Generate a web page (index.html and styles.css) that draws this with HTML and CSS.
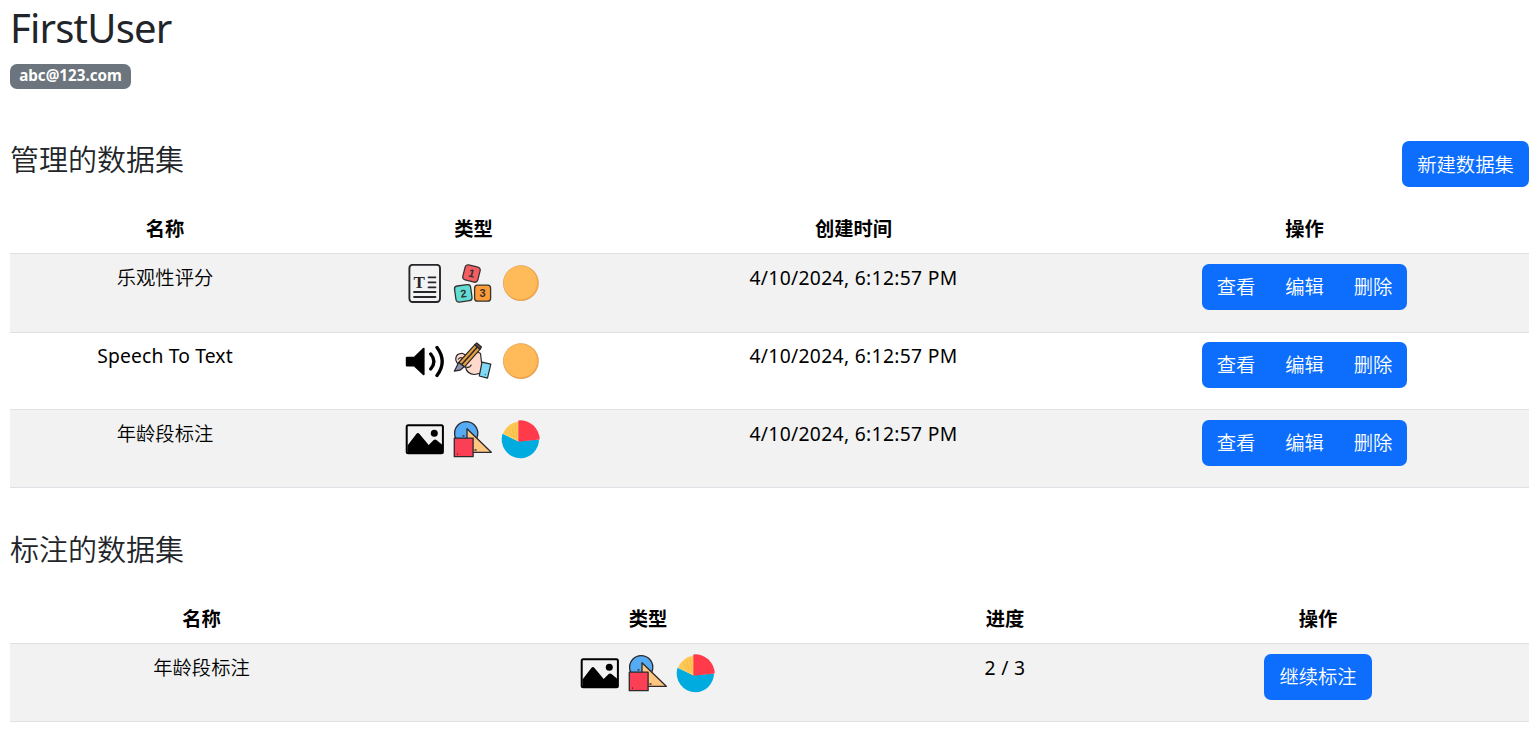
FILE: index.html
```html
<!DOCTYPE html>
<html lang="zh-CN">
<head>
<meta charset="utf-8">
<title>FirstUser</title>
<link rel="stylesheet" href="styles.css">
</head>
<body>
<svg class="sprite" aria-hidden="true">
  <symbol id="document" viewBox="0 0 39 39">
    <rect x="4.4" y=".8" width="30.6" height="37.2" rx="3.2" fill="#f3f3f3" stroke="#29262b" stroke-width="1.9"/>
    <text x="8.6" y="24" class="serif-mark">T</text>
    <path d="M23.500 13.3h7M23.500 18.3h7M23.500 23.3h7M9 28h21.5M9 33h21.5" fill="none" stroke="#29262b" stroke-width="1.8" stroke-linecap="round"/>
  </symbol>
  <symbol id="blocks" viewBox="0 0 39 39">
    <g stroke="#36332f" stroke-width="1.3">
      <g transform="rotate(14 18.5 9.4)"><rect x="10.8" y="1.8" width="15.4" height="15.4" rx="3" fill="#f35d63"/><text x="18.5" y="13" class="block-mark">1</text></g>
      <g transform="rotate(-8 10.4 29.4)"><rect x="2.2" y="21.2" width="16.2" height="16.2" rx="3" fill="#62ddd5"/><text x="10.4" y="33.4" class="block-mark">2</text></g>
      <rect x="21.6" y="21.2" width="16" height="16" rx="3" fill="#ff9c38"/><text x="29.6" y="33.4" class="block-mark">3</text>
    </g>
  </symbol>
  <symbol id="coin" viewBox="0 0 39 39">
    <circle cx="19.9" cy="19.2" r="17.9" fill="#dca367"/>
    <circle cx="19.9" cy="19.1" r="17.3" fill="#f7a647"/>
    <circle cx="19.3" cy="18.6" r="16.7" fill="#ffbb59"/>
  </symbol>
  <symbol id="sound" viewBox="0 0 39 39">
    <path d="M1.8 14.7H9L18 6q1.6-1 1.6.8v25.4q0 1.8-1.6.8L9 24.4H1.8q-1 0-1-1v-7.7q0-1 1-1Z"/>
    <path d="M25.7 12q6.400 7.500 0 15M32 5.500q10.400 13.900 0 28" fill="none" stroke="#000" stroke-width="3.300" stroke-linecap="round"/>
  </symbol>
  <symbol id="writing" viewBox="0 0 39 39">
    <g stroke="#29272b" stroke-width="1.2" stroke-linejoin="round">
      <path d="M3 15.500Q3.500 11.500 9 11.300l5 2.200L23 9l4.500 2.500 1 8.500 1.500 3-2 8.200-6.500 1.300Q14 32 12.500 25L5 22Q2 18.500 3 15.500Z" fill="#ffd9cc"/>
      <path d="m29 20.200 8.800 2-3.300 14-8.200-2.200Z" fill="#80daf7"/>
      <path d="m5.700 20.500 16-17.700 5.300 4.500-15.500 17.500Z" fill="#e5a140"/>
      <path d="m8.500 22.700 15.900-17.700" fill="none" stroke-width="1.500"/>
      <path d="m5.700 20.500 5.500 4.300L7 28.200l-5.700 1Z" fill="#8d93aa"/>
      <path d="m21.700 2.800 2.100-1.800 4.700 4L27 7.300Z" fill="#6a4a3d"/>
      <path d="M5 17.500q2-3 4.500-1M12.800 25q4.200 1.300 5.600-2.400" fill="none"/>
    </g>
    <circle cx="32.300" cy="32.500" r=".8" fill="#3286a7"/>
  </symbol>
  <symbol id="image" viewBox="0 0 39 39">
    <rect x="1.700" y="5.300" width="36.200" height="28" rx="1.500" fill="none" stroke="#000" stroke-width="2"/>
    <path d="m2.500 25.500 8.800-11.500q1.600-2 3.200 0L23.700 25l5-5q1.400-1.200 2.800 0l6 5v8.500h-35Z"/>
    <circle cx="29.300" cy="13.300" r="3.500"/>
  </symbol>
  <symbol id="shapes" viewBox="0 0 39 39">
    <g stroke="#2d292c" stroke-width="1.300" stroke-linejoin="round">
      <circle cx="13.200" cy="13.200" r="11.600" fill="#55abf4"/>
      <path d="M14 8.700 38.300 32.300H14Z" fill="#fec681"/>
      <rect x="1.300" y="18.200" width="18.800" height="18.500" fill="#fb4056"/>
      <path d="M9.500 15.800h2M21.500 30h2M4 34.200h1" fill="none"/>
    </g>
  </symbol>
  <symbol id="pie" viewBox="0 0 39 39">
    <path d="M17.300 21.200 1.500 13.800A19 19 0 0 0 19.500 38.300 19 19 0 0 0 38 19.500Z" fill="#00acdf"/>
    <path d="m17.500 21.500-15.500-7.700A19 19 0 0 1 17.400 1.700Z" fill="#ffc854"/>
    <path d="m7.600 8.500 3.300 7.700M10.700 5.800l2.600 11.300M14 3.700l1.600 14" fill="none" stroke="#efb747" stroke-width=".8"/>
    <path d="M17.300 21.800V.4A19.500 19.500 0 0 1 38.700 19.600Z" fill="#ff3a4b"/>
  </symbol>
</svg>

<header class="profile">
  <h1 class="profile-name">FirstUser</h1>
  <span class="badge">abc@123.com</span>
</header>

<section class="managed">
  <div class="section-head">
    <h2 class="section-title">管理的数据集</h2>
    <button class="button create" type="button">新建数据集</button>
  </div>
  <table class="datasets">
    <colgroup><col class="managed-name"><col class="managed-type"><col class="managed-time"><col></colgroup>
    <thead><tr><th>名称</th><th>类型</th><th>创建时间</th><th>操作</th></tr></thead>
    <tbody>
      <tr class="tall striped">
        <td><div class="label">乐观性评分</div></td>
        <td><div class="icons"><svg><use href="#document"/></svg><svg><use href="#blocks"/></svg><svg><use href="#coin"/></svg></div></td>
        <td><div class="label latin">4/10/2024, 6:12:57 PM</div></td>
        <td><div class="button-group"><button class="button" type="button">查看</button><button class="button" type="button">编辑</button><button class="button" type="button">删除</button></div></td>
      </tr>
      <tr class="short">
        <td><div class="label latin name">Speech To Text</div></td>
        <td><div class="icons"><svg><use href="#sound"/></svg><svg><use href="#writing"/></svg><svg><use href="#coin"/></svg></div></td>
        <td><div class="label latin">4/10/2024, 6:12:57 PM</div></td>
        <td><div class="button-group"><button class="button" type="button">查看</button><button class="button" type="button">编辑</button><button class="button" type="button">删除</button></div></td>
      </tr>
      <tr class="striped">
        <td><div class="label">年龄段标注</div></td>
        <td><div class="icons"><svg><use href="#image"/></svg><svg><use href="#shapes"/></svg><svg><use href="#pie"/></svg></div></td>
        <td><div class="label latin">4/10/2024, 6:12:57 PM</div></td>
        <td><div class="button-group"><button class="button" type="button">查看</button><button class="button" type="button">编辑</button><button class="button" type="button">删除</button></div></td>
      </tr>
    </tbody>
  </table>
</section>

<section class="assigned">
  <div class="section-head">
    <h2 class="section-title">标注的数据集</h2>
  </div>
  <table class="datasets">
    <colgroup><col class="assigned-name"><col class="assigned-type"><col class="assigned-progress"><col></colgroup>
    <thead><tr><th>名称</th><th>类型</th><th>进度</th><th>操作</th></tr></thead>
    <tbody>
      <tr class="striped">
        <td><div class="label">年龄段标注</div></td>
        <td><div class="icons"><svg><use href="#image"/></svg><svg><use href="#shapes"/></svg><svg><use href="#pie"/></svg></div></td>
        <td><div class="label latin">2 / 3</div></td>
        <td><button class="button" type="button">继续标注</button></td>
      </tr>
    </tbody>
  </table>
</section>
</body>
</html>
```
FILE: styles.css
```css
* { box-sizing: border-box; }

body {
  margin: 0;
  padding: 0 11px 0 10px;
  background: #fff;
  color: #212529;
  font: 19.3px/29px "Noto Sans", "Noto Sans CJK SC", sans-serif;
}

.sprite { display: none; }

.serif-mark { font: bold 17px "Liberation Serif", serif; fill: #29262b; }

.block-mark {
  font: bold 11px "Liberation Sans", sans-serif;
  fill: #36332f;
  stroke: none;
  text-anchor: middle;
}

.profile { height: 141px; padding-top: 4px; }

.profile-name {
  margin: 0 0 12px;
  font-size: 40px;
  font-weight: 400;
  letter-spacing: -0.8px;
  line-height: 48px;
}

.badge {
  display: block;
  width: 121px;
  height: 25px;
  border-radius: 7px;
  background: #6c757d;
  color: #fff;
  font-size: 15.200px;
  font-weight: 700;
  line-height: 23px;
  text-align: center;
}

.section-head {
  display: flex;
  align-items: flex-start;
  justify-content: space-between;
  height: 64px;
}

.section-title {
  margin: 0;
  font-family: "Noto Sans CJK SC", sans-serif;
  font-size: 29px;
  font-weight: 350;
  line-height: 34px;
}

.managed { height: 390px; }

.datasets {
  width: 100%;
  border-collapse: separate;
  border-spacing: 0;
  table-layout: fixed;
  color: #000;
  font-family: "Noto Sans CJK SC", sans-serif;
  font-weight: 350;
  text-align: center;
}

.managed-name { width: 310px; }
.managed-type { width: 307px; }
.managed-time { width: 453px; }
.assigned-name { width: 383px; }
.assigned-type { width: 510px; }
.assigned-progress { width: 204px; }

.datasets th {
  height: 49px;
  padding: 9px 0 10px;
  border-bottom: 1px solid #dee2e6;
  font-weight: 700;
}

.datasets td {
  height: 78px;
  padding: 10px 0 0;
  border-bottom: 1px solid #dee2e6;
  vertical-align: top;
}

.tall td { height: 79px; }
.short td { height: 77px; padding-top: 9px; }
.striped td { background: #f2f2f2; }

.label { line-height: 27px; }

.latin {
  font-family: "Noto Sans", sans-serif;
  font-weight: 400;
  letter-spacing: 0.32px;
}

.latin.name { letter-spacing: 0.15px; }

.icons {
  display: flex;
  justify-content: center;
  gap: 9px;
  padding-right: 2px;
}

.icons svg { display: block; width: 39px; height: 39px; }

.button {
  height: 46px;
  padding: 0 15px 1px;
  border: 0;
  border-radius: 7px;
  background: #0d6efd;
  color: #fff;
  font: 350 19.3px/29px "Noto Sans CJK SC", sans-serif;
}

.create { width: 127px; padding: 0; }

.button-group { display: inline-flex; }
.button-group .button { width: 68.500px; padding: 0 0 1px; }
.button-group .button:not(:last-child) { border-top-right-radius: 0; border-bottom-right-radius: 0; }
.button-group .button:not(:first-child) { border-top-left-radius: 0; border-bottom-left-radius: 0; }
```
